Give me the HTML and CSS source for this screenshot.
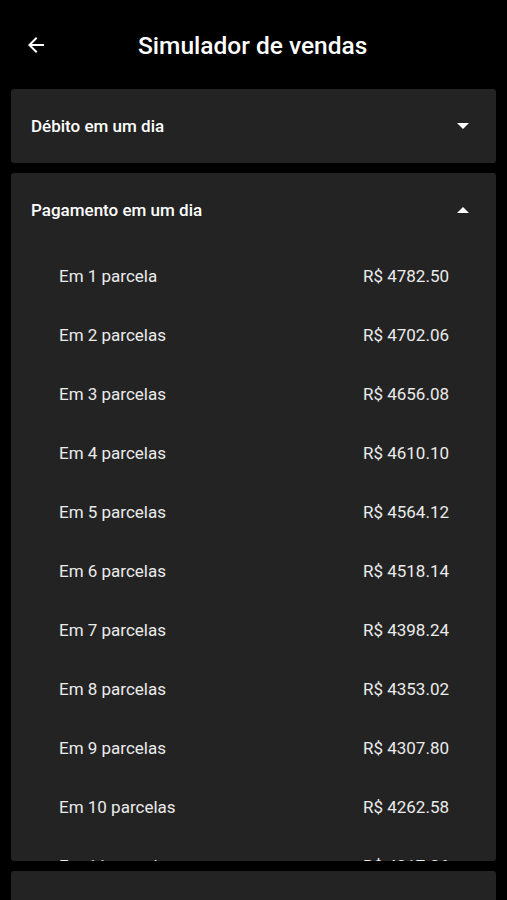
FILE: index.html
```html
<!DOCTYPE html>
<html>
<head>
    <link rel="stylesheet" href="styles.css">
</head>
<body>
<header class="topbar">
    <svg class="back" width="24" height="24" viewBox="0 0 24 24"><path d="M20 11H7.83l5.59-5.59L12 4l-8 8 8 8 1.41-1.41L7.83 13H20v-2z" fill="#fff"/></svg>
    <h1 class="title">Simulador de vendas</h1>
</header>

<section class="panel">
    <div class="panel-head">
        <span>Débito em um dia</span>
        <span class="caret down"></span>
    </div>
</section>

<section class="panel open">
    <div class="panel-head">
        <span>Pagamento em um dia</span>
        <span class="caret up"></span>
    </div>
    <ul class="rows">
        <li><span>Em 1 parcela</span><span>R$ 4782.50</span></li>
        <li><span>Em 2 parcelas</span><span>R$ 4702.06</span></li>
        <li><span>Em 3 parcelas</span><span>R$ 4656.08</span></li>
        <li><span>Em 4 parcelas</span><span>R$ 4610.10</span></li>
        <li><span>Em 5 parcelas</span><span>R$ 4564.12</span></li>
        <li><span>Em 6 parcelas</span><span>R$ 4518.14</span></li>
        <li><span>Em 7 parcelas</span><span>R$ 4398.24</span></li>
        <li><span>Em 8 parcelas</span><span>R$ 4353.02</span></li>
        <li><span>Em 9 parcelas</span><span>R$ 4307.80</span></li>
        <li><span>Em 10 parcelas</span><span>R$ 4262.58</span></li>
        <li><span>Em 11 parcelas</span><span>R$ 4217.36</span></li>
    </ul>
</section>

<section class="panel next"></section>
</body>
</html>
```

FILE: styles.css
```css
body {
    margin: 0;
    background: #000;
    font-family: Roboto, 'Noto Sans', sans-serif;
    color: #fff;
    height: 900px;
    overflow: hidden;
}

.topbar {
    display: flex;
    align-items: center;
    height: 89px;
    padding: 0 0 0 24px;
}

.back {
    display: block;
}

.title {
    margin: 0 0 0 90px;
    font-size: 24.5px;
    font-weight: 500;
    position: relative;
    top: 1px;
}

.panel {
    background: #232323;
    margin: 0 11px 10px;
    border-radius: 3px;
    box-shadow: 0 1px 2px rgba(0, 0, 0, 0.6);
}

.panel-head {
    display: flex;
    align-items: center;
    justify-content: space-between;
    height: 74px;
    padding: 0 27px 0 20px;
    font-size: 17px;
    font-weight: 500;
}

.open {
    height: 688px;
    overflow: hidden;
}

.open .panel-head {
    height: 73px;
}

.next {
    height: 60px;
}

/* dropdown carets */
.caret {
    width: 0;
    height: 0;
    border-left: 6px solid transparent;
    border-right: 6px solid transparent;
}

.caret.down {
    border-top: 6px solid #fff;
}

.caret.up {
    border-bottom: 6px solid #fff;
}

.rows {
    list-style: none;
    margin: 0;
    padding: 0;
}

.rows li {
    display: flex;
    justify-content: space-between;
    align-items: center;
    height: 59px;
    padding: 0 47px 0 48px;
    font-size: 17px;
    color: #ebebeb;
}
```
